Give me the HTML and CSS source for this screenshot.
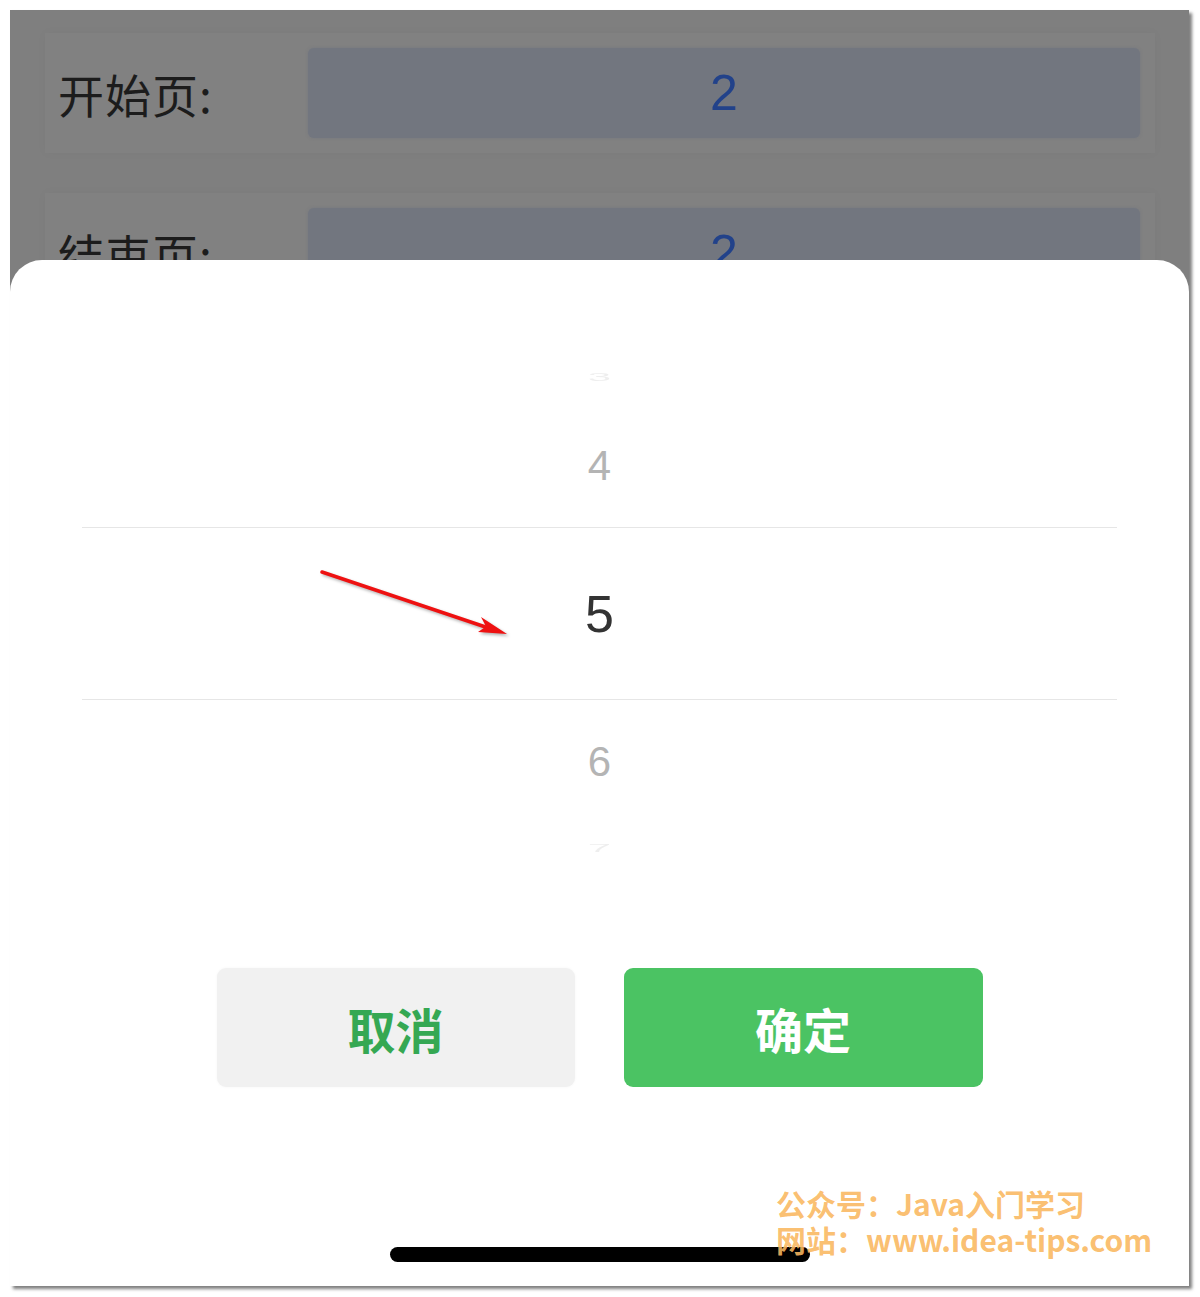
FILE: index.html
```html
<!DOCTYPE html>
<html lang="zh-CN">
<head>
<meta charset="utf-8">
<title>页码选择</title>
<link rel="stylesheet" href="styles.css">
</head>
<body>
<div class="screen">
  <div class="page">
    <div class="field">
      <span class="field-label">开始页:</span>
      <div class="field-input">2</div>
    </div>
    <div class="field">
      <span class="field-label">结束页:</span>
      <div class="field-input">2</div>
    </div>
  </div>

  <div class="sheet">
    <div class="picker">
      <div class="pick pick-edge pick-top"><span>3</span></div>
      <div class="pick pick-near"><span>4</span></div>
      <div class="pick pick-current"><span>5</span></div>
      <div class="pick pick-near"><span>6</span></div>
      <div class="pick pick-edge pick-bottom"><span>7</span></div>
    </div>
    <div class="actions">
      <button class="btn btn-cancel">取消</button>
      <button class="btn btn-ok">确定</button>
    </div>
    <div class="home-bar"></div>
  </div>

  <svg class="arrow" width="220" height="90" viewBox="0 0 220 90">
    <line x1="12" y1="12" x2="180" y2="68.5" stroke="#ee1111" stroke-width="3.5" stroke-linecap="round"/>
    <polygon points="197,74 171,57 176,66.5 168,72" fill="#ee1111"/>
  </svg>

  <div class="stamp">
    <div class="stamp-line">公众号：Java入门学习</div>
    <div class="stamp-line">网站：www.idea-tips.com</div>
  </div>
</div>
</body>
</html>
```

FILE: styles.css
```css
html, body {
  margin: 0;
  padding: 0;
  background: #ffffff;
}

body {
  width: 1200px;
  height: 1297px;
  overflow: hidden;
}

/* phone screen frame */
.screen {
  position: relative;
  margin: 10px 0 0 10px;
  width: 1179px;
  height: 1276px;
  background: #7f7f7f;
  overflow: hidden;
  box-shadow: 3px 3px 3px rgba(0, 0, 0, 0.5);
}

/* dimmed form behind the sheet */
.page {
  display: flex;
  flex-direction: column;
  gap: 40px;
  padding: 23px 34px 0 35px;
}

.field {
  display: flex;
  align-items: center;
  height: 120px;
  padding: 15px 15px 15px 13px;
  box-sizing: border-box;
  background: #818181;
  box-shadow: 0 0 10px rgba(0, 0, 0, 0.03);
}

.field-label {
  flex: 0 0 250px;
  font-family: "Noto Sans CJK SC", "Noto Sans", sans-serif;
  font-size: 46px;
  line-height: 1;
  letter-spacing: 1px;
  color: #1c1c1c;
}

.field-input {
  flex: 1;
  height: 90px;
  display: flex;
  align-items: center;
  justify-content: center;
  background: #72767f;
  border-radius: 6px;
  box-shadow: 0 0 3px rgba(114, 118, 127, 0.8);
  font-family: "Liberation Sans", Arial, sans-serif;
  font-size: 50px;
  color: #22428a;
}

/* bottom sheet */
.sheet {
  position: absolute;
  top: 250px;
  left: 0;
  right: 0;
  bottom: 0;
  background: #ffffff;
  border-radius: 32px 32px 0 0;
  padding-top: 70px;
  display: flex;
  flex-direction: column;
  align-items: center;
}

.picker {
  align-self: stretch;
  margin: 0 72px;
  display: flex;
  flex-direction: column;
}

.pick {
  display: flex;
  justify-content: center;
  align-items: center;
  font-family: "Liberation Sans", Arial, sans-serif;
  line-height: 1;
}

.pick-edge {
  height: 74px;
  font-size: 42px;
  color: #c8c8c8;
  opacity: 0.3;
}

.pick-edge span {
  transform: scaleY(0.28);
  filter: blur(0.6px);
}

.pick-top {
  align-items: flex-end;
  padding-bottom: 6px;
  box-sizing: border-box;
}

.pick-bottom {
  align-items: flex-start;
  padding-top: 4px;
  box-sizing: border-box;
}

.pick-near {
  height: 123px;
  font-size: 42px;
  color: #b4b4b4;
}

.pick-current {
  height: 173px;
  box-sizing: border-box;
  border-top: 1px solid #e6e6e6;
  border-bottom: 1px solid #e6e6e6;
  font-size: 52px;
  color: #333333;
}

.actions {
  display: flex;
  gap: 49px;
  margin-top: 71px;
}

.btn {
  width: 358px;
  height: 119px;
  border: none;
  border-radius: 9px;
  font-family: "Noto Sans CJK SC", "Noto Sans", sans-serif;
  font-size: 48px;
  font-weight: 700;
  line-height: 1;
  padding: 0;
  cursor: pointer;
}

.btn-cancel {
  background: #f1f1f1;
  color: #35a853;
  box-shadow: 0 0 3px rgba(0, 0, 0, 0.04);
}

.btn-ok {
  width: 359px;
  background: #4bc363;
  color: #ffffff;
}

.home-bar {
  margin-top: 160px;
  width: 420px;
  height: 15px;
  border-radius: 8px;
  background: #000000;
}

/* annotation arrow */
.arrow {
  position: absolute;
  left: 300px;
  top: 550px;
  filter: drop-shadow(2px 2px 1.5px rgba(0, 0, 0, 0.3));
}

/* corner watermark */
.stamp {
  position: absolute;
  left: 766px;
  top: 1175px;
  font-family: "Noto Sans CJK SC", "Noto Sans", sans-serif;
  font-size: 30px;
  font-weight: 700;
  color: rgba(250, 184, 96, 0.9);
  white-space: nowrap;
}

.stamp-line {
  height: 36px;
  line-height: 36px;
}
```
